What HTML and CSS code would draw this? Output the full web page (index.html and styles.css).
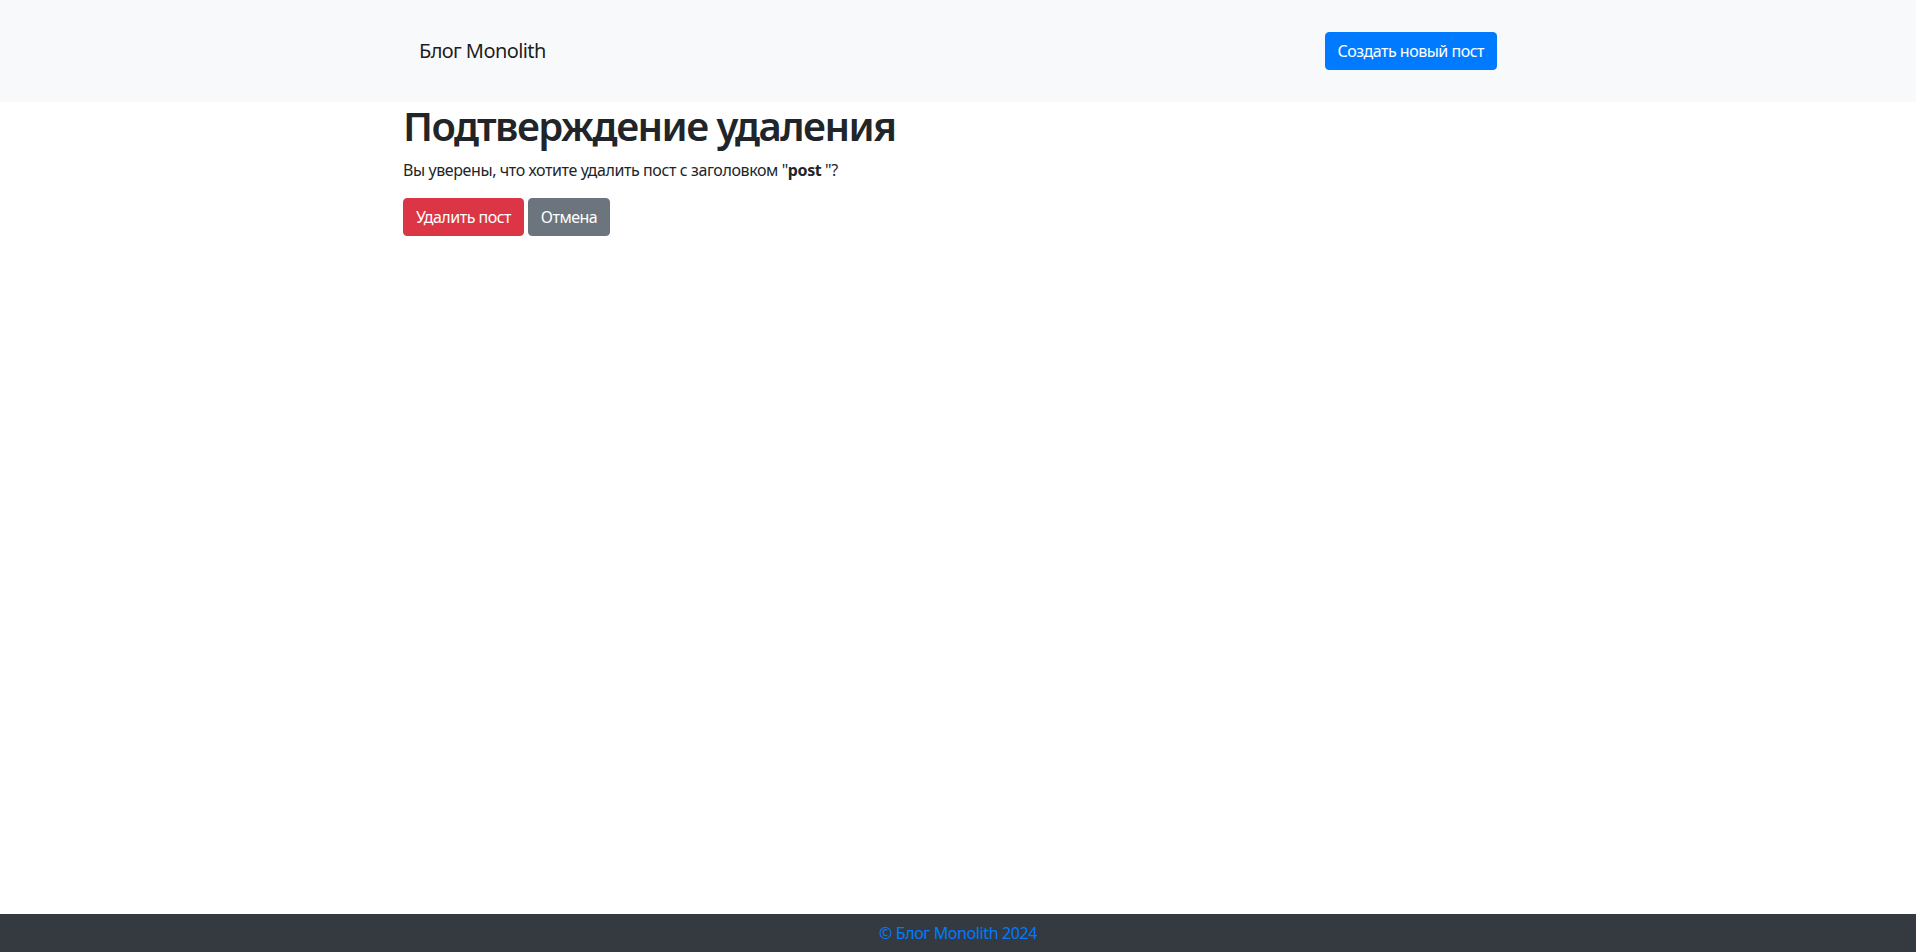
FILE: index.html
```html
<!DOCTYPE html>
<html lang="ru">
<head>
<meta charset="utf-8">
<title>Подтверждение удаления</title>
<link rel="stylesheet" href="styles.css">
</head>
<body>
<header class="site-header">
  <div class="container">
    <nav class="navbar">
      <a class="navbar-brand" href="#">Блог Monolith</a>
      <a class="btn btn-primary" href="#">Создать новый пост</a>
    </nav>
  </div>
</header>
<main class="main">
  <div class="container">
    <h1 class="title">Подтверждение удаления</h1>
    <p class="lead-text">Вы уверены, что хотите удалить пост с заголовком "<strong>post </strong>"?</p>
    <form class="actions">
      <button type="button" class="btn btn-danger">Удалить пост</button>
      <a class="btn btn-secondary" href="#">Отмена</a>
    </form>
  </div>
</main>
<footer class="site-footer">
  <a class="footer-link" href="#">© Блог Monolith 2024</a>
</footer>
</body>
</html>
```

FILE: styles.css
```css
* { box-sizing: border-box; }
html, body { height: 100%; }
body {
  margin: 0;
  font-family: "Noto Sans", "Open Sans", Roboto, sans-serif;
  font-size: 16px;
  line-height: 1.5;
  letter-spacing: -0.4px;
  color: #212529;
  background: #fff;
  display: flex;
  flex-direction: column;
  min-height: 100vh;
}
.container {
  width: 100%;
  max-width: 1140px;
  margin: 0 auto;
  padding: 0 15px;
}
.site-header {
  background: #f8f9fa;
  padding: 24px 0;
}
.navbar {
  display: flex;
  align-items: center;
  justify-content: space-between;
  padding: 8px 16px;
}
.navbar-brand {
  font-size: 20px;
  line-height: 30px;
  padding: 4px 0;
  letter-spacing: -0.6px;
  color: rgba(0,0,0,.9);
  text-decoration: none;
}
.btn {
  display: inline-block;
  font-family: inherit;
  font-size: 16px;
  line-height: 24px;
  letter-spacing: -0.5px;
  padding: 6px 12px;
  border: 1px solid transparent;
  border-radius: 4px;
  color: #fff;
  text-decoration: none;
  cursor: pointer;
  vertical-align: middle;
}
.btn-primary { background: #007bff; border-color: #007bff; }
.btn-danger { background: #dc3545; border-color: #dc3545; }
.btn-secondary { background: #6c757d; border-color: #6c757d; }
.main { flex: 1 0 auto; }
.title {
  margin: 0 0 8px;
  font-size: 40px;
  line-height: 1.2;
  font-weight: 600;
  letter-spacing: -1.5px;
}
.lead-text { margin: 0 0 16px; }
.lead-text strong { font-weight: 700; }
.actions { margin: 0; }
.site-footer {
  background: #343a40;
  text-align: center;
  padding: 7px 0;
}
.footer-link {
  color: #007bff;
  text-decoration: none;
}
```
